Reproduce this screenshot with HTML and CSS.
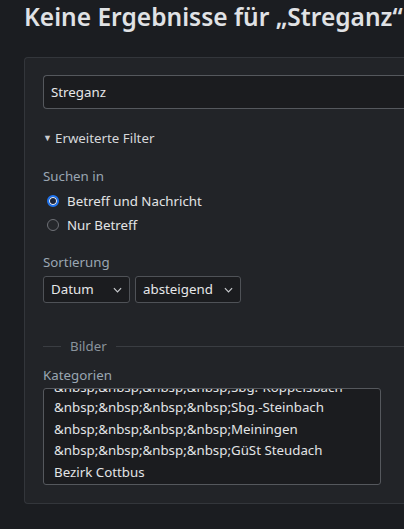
FILE: index.html
```html
<!DOCTYPE html>
<html lang="de">
<head>
<meta charset="utf-8">
<link rel="stylesheet" href="styles.css">
</head>
<body>
<div class="page">
  <h1 class="title">Keine Ergebnisse für „Streganz“</h1>
  <div class="panel">
    <div class="search-input">Streganz</div>
    <div class="toggle"><span class="tri">▼</span>Erweiterte Filter</div>

    <div class="label">Suchen in</div>
    <div class="radios">
      <div class="radio-row"><span class="radio checked"></span>Betreff und Nachricht</div>
      <div class="radio-row"><span class="radio"></span>Nur Betreff</div>
    </div>

    <div class="label sort-label">Sortierung</div>
    <div class="selects">
      <div class="select s1">Datum<svg class="chev" viewBox="0 0 10 6" width="9" height="6"><path d="M1 1l4 4 4-4" fill="none" stroke="#c8cacd" stroke-width="1.3"/></svg></div>
      <div class="select s2">absteigend<svg class="chev" viewBox="0 0 10 6" width="9" height="6"><path d="M1 1l4 4 4-4" fill="none" stroke="#c8cacd" stroke-width="1.3"/></svg></div>
    </div>

    <div class="legend"><span class="line short"></span><span class="legend-text">Bilder</span><span class="line long"></span></div>

    <div class="label cat-label">Kategorien</div>
    <div class="listbox">
      <div class="item partial"><span>&amp;nbsp;&amp;nbsp;&amp;nbsp;&amp;nbsp;Sbg.-Koppelsbach</span></div>
      <div class="item">&amp;nbsp;&amp;nbsp;&amp;nbsp;&amp;nbsp;Sbg.-Steinbach</div>
      <div class="item">&amp;nbsp;&amp;nbsp;&amp;nbsp;&amp;nbsp;Meiningen</div>
      <div class="item">&amp;nbsp;&amp;nbsp;&amp;nbsp;&amp;nbsp;GüSt Steudach</div>
      <div class="item">Bezirk Cottbus</div>
    </div>
  </div>
</div>
</body>
</html>
```

FILE: styles.css
```css
html, body {
  margin: 0;
  padding: 0;
  background: #1b1d21;
  overflow: hidden;
}
body {
  font-family: "Noto Sans", "Open Sans", sans-serif;
  color: #dfe1e4;
  width: 404px;
  height: 529px;
}
.page {
  padding: 0 0 0 24px;
  width: 380px;
  overflow: hidden;
}
.title {
  margin: 0;
  padding-top: 1px;
  font-size: 24.5px;
  font-weight: 600;
  line-height: 32px;
  color: #e0e2e5;
  white-space: nowrap;
  letter-spacing: 0;
  overflow: hidden;
}
.panel {
  margin-top: 24px;
  background: #222428;
  border: 1px solid #33363b;
  border-right: none;
  border-radius: 4px 0 0 4px;
  padding: 17px 0 18px 18px;
  box-sizing: border-box;
  height: 447px;
}
.search-input {
  height: 34px;
  box-sizing: border-box;
  border: 1px solid #55585d;
  border-right: none;
  border-radius: 4px 0 0 4px;
  background: #1b1c1f;
  padding: 0 7px;
  font-size: 13.3px;
  line-height: 32px;
  color: #e6e7e9;
}
.toggle {
  margin-top: 19px;
  font-size: 13.3px;
  line-height: 20px;
  color: #d6d8db;
}
.tri {
  font-size: 9px;
  display: inline-block;
  width: 12px;
  vertical-align: 2px;
  color: #c9cbce;
}
.label {
  margin-top: 18px;
  font-size: 13.3px;
  line-height: 20px;
  color: #9aa6b2;
}
.radios {
  margin-top: 3px;
}
.radio-row {
  display: flex;
  align-items: center;
  height: 24px;
  font-size: 13.3px;
  color: #e2e4e6;
}
.radio {
  width: 12px;
  height: 12px;
  box-sizing: border-box;
  border-radius: 50%;
  border: 1px solid #6f7177;
  background: #26282c;
  margin: 0 8px 0 4px;
  flex: none;
}
.radio.checked {
  border: 2px solid #1f74f0;
  background: #1c2438;
  box-shadow: inset 0 0 0 1px #e9eef8;
}
.sort-label {
  margin-top: 15px;
}
.selects {
  display: flex;
  gap: 5px;
  margin-top: 4px;
}
.select {
  height: 27px;
  box-sizing: border-box;
  border: 1px solid #4f5257;
  border-radius: 3px;
  background: #1b1c1f;
  font-size: 13.3px;
  line-height: 25px;
  padding: 0 7px;
  color: #e6e7e9;
  display: flex;
  align-items: center;
  justify-content: space-between;
}
.s1 { width: 87px; }
.s2 { width: 106px; }
.chev { flex: none; }
.legend {
  margin-top: 33px;
  display: flex;
  align-items: center;
  height: 20px;
}
.line {
  height: 1px;
  background: #3a3d42;
}
.line.short { width: 18px; }
.line.long { flex: 1; }
.legend-text {
  font-size: 13.3px;
  color: #8a939c;
  padding: 0 9px;
}
.cat-label {
  margin-top: 9px;
}
.listbox {
  margin-top: 3px;
  width: 338px;
  height: 97px;
  box-sizing: border-box;
  border: 1px solid #55585d;
  border-radius: 3px;
  background: #1b1c1f;
  overflow: hidden;
  padding-left: 10px;
}
.item {
  font-size: 13.3px;
  line-height: 21.5px;
  color: #e2e4e6;
  white-space: nowrap;
}
.item.partial {
  height: 8px;
  line-height: 8px;
  overflow: hidden;
  display: flex;
  align-items: flex-end;
}
.item.partial span {
  display: block;
  line-height: 21.5px;
  margin-bottom: -1px;
}
```
